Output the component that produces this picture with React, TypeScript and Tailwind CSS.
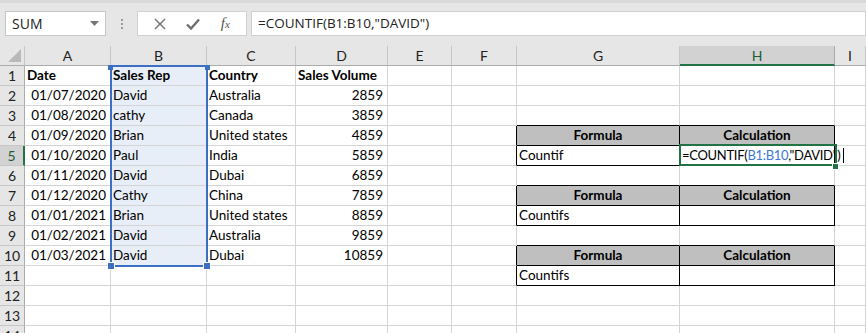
import React from 'react';

const COLS = ['A', 'B', 'C', 'D', 'E', 'F', 'G', 'H', 'I'];
const ROWS = 14;

type CellDef = { text: React.ReactNode; bold?: boolean; align?: 'left' | 'right' | 'center' };

const data: Record<string, CellDef> = {
    A1: { text: 'Date', bold: true },
    B1: { text: 'Sales Rep', bold: true },
    C1: { text: 'Country', bold: true },
    D1: { text: 'Sales Volume', bold: true },
    G4: { text: 'Formula', bold: true, align: 'center' },
    H4: { text: 'Calculation', bold: true, align: 'center' },
    G5: { text: 'Countif' },
    H5: {
        text: (
            <span className="text-[13px] tracking-[-0.3px] flex items-center">
                =COUNTIF(<span className="text-[#3c78d8]">B1:B10</span>,"DAVID")
                <span className="inline-block w-[1px] h-[15px] bg-black ml-[3px]" />
            </span>
        ),
    },
    G7: { text: 'Formula', bold: true, align: 'center' },
    H7: { text: 'Calculation', bold: true, align: 'center' },
    G8: { text: 'Countifs' },
    G10: { text: 'Formula', bold: true, align: 'center' },
    H10: { text: 'Calculation', bold: true, align: 'center' },
    G11: { text: 'Countifs' },
};

const rows: [string, string, string, string][] = [
    ['01/07/2020', 'David', 'Australia', '2859'],
    ['01/08/2020', 'cathy', 'Canada', '3859'],
    ['01/09/2020', 'Brian', 'United states', '4859'],
    ['01/10/2020', 'Paul', 'India', '5859'],
    ['01/11/2020', 'David', 'Dubai', '6859'],
    ['01/12/2020', 'Cathy', 'China', '7859'],
    ['01/01/2021', 'Brian', 'United states', '8859'],
    ['01/02/2021', 'David', 'Australia', '9859'],
    ['01/03/2021', 'David', 'Dubai', '10859'],
];
rows.forEach((r, i) => {
    const n = i + 2;
    data['A' + n] = { text: r[0], align: 'right' };
    data['B' + n] = { text: r[1] };
    data['C' + n] = { text: r[2] };
    data['D' + n] = { text: r[3], align: 'right' };
});

const tableRows = [4, 5, 7, 8, 10, 11];
const isTable = (r: number, c: number) => (c === 6 || c === 7) && tableRows.includes(r);

function Cell({ r, c }: { r: number; c: number }) {
    const key = COLS[c] + r;
    const cell = data[key];
    const header = (r === 4 || r === 7 || r === 10) && isTable(r, c);
    const selected = c === 1 && r <= 10;
    const right = isTable(r, c) || isTable(r, c + 1) ? 'border-r-black' : 'border-r-[#d4d4d4]';
    const bottom = isTable(r, c) || isTable(r + 1, c) ? 'border-b-black' : 'border-b-[#d4d4d4]';
    const bg = header ? 'bg-[#bfbfbf]' : selected ? 'bg-[#e8eef8]' : 'bg-white';
    const align =
        cell?.align === 'right' ? 'justify-end pr-[4px]' : cell?.align === 'center' ? 'justify-center' : 'justify-start pl-[2px]';
    return (
        <div
            className={`h-[20px] border-r border-b ${right} ${bottom} ${bg} flex items-center ${align} whitespace-nowrap text-[13.5px] text-black ${
                cell?.bold ? 'font-bold' : ''
            } ${key === 'H5' ? 'overflow-visible relative z-10' : 'overflow-hidden'}`}
        >
            {cell?.text}
        </div>
    );
}

export default function App() {
    return (
        <div className="w-[866px] h-[333px] overflow-hidden bg-white relative" style={{ fontFamily: 'Lato, "Liberation Sans", sans-serif' }}>
            {/* formula bar */}
            <div className="h-[46px] bg-[#e6e6e6] flex items-start pt-[10px] pl-[5px] border-t-[3px] border-t-[#dadada]">
                <div className="w-[101px] h-[25px] -mt-[2px] bg-white border border-[#c6c6c6] flex items-center justify-between pl-[6px] pr-[6px]">
                    <span className="text-[14px] text-[#222]" style={{ fontFamily: '"Open Sans", sans-serif' }}>SUM</span>
                    <svg width="9" height="5" viewBox="0 0 9 5"><path d="M0 0h9L4.5 5z" fill="#777" /></svg>
                </div>
                <div className="w-[31px] h-[25px] -mt-[2px] flex flex-col items-center justify-center gap-[2px]">
                    <span className="w-[2px] h-[2px] bg-[#9a9a9a]" />
                    <span className="w-[2px] h-[2px] bg-[#9a9a9a]" />
                    <span className="w-[2px] h-[2px] bg-[#9a9a9a]" />
                </div>
                <div className="w-[110px] h-[25px] -mt-[2px] bg-white border border-[#d0d0d0] flex items-center justify-around px-[6px]">
                    <svg width="12" height="12" viewBox="0 0 12 12"><path d="M1 1l10 10M11 1L1 11" stroke="#6e6e6e" strokeWidth="1.4" /></svg>
                    <svg width="14" height="12" viewBox="0 0 14 12"><path d="M1 6.5l4 4L13 1.5" stroke="#6e6e6e" strokeWidth="2.4" fill="none" /></svg>
                    <span className="text-[15px] italic text-[#555]" style={{ fontFamily: '"Liberation Serif", serif' }}>
                        f<span className="text-[11px]">x</span>
                    </span>
                </div>
                <div className="flex-1 h-[25px] -mt-[2px] ml-[4px] bg-white border border-[#d0d0d0] flex items-center pl-[6px]">
                    <span className="text-[13.5px] text-[#222]" style={{ fontFamily: '"Open Sans", sans-serif' }}>=COUNTIF(B1:B10,"DAVID")</span>
                </div>
            </div>

            {/* sheet */}
            <div className="relative grid grid-cols-[25px_86px_96px_89px_92px_64px_65px_163px_155px_31px]">
                {/* corner */}
                <div className="h-[20px] bg-[#e6e6e6] border-r border-b border-r-[#c6c6c6] border-b-[#ababab] relative">
                    <svg className="absolute right-[3px] bottom-[3px]" width="13" height="13" viewBox="0 0 13 13"><path d="M13 0v13H0z" fill="#b9b9b9" /></svg>
                </div>
                {COLS.map((col) => (
                    <div
                        key={col}
                        className={`h-[20px] border-r border-b flex items-center justify-center text-[14px] ${
                            col === 'H'
                                ? 'bg-[#d2d2d2] border-b-2 border-b-[#217346] text-[#1d5c3a] border-r-[#ababab]'
                                : 'bg-[#e6e6e6] border-b-[#ababab] border-r-[#c6c6c6] text-[#222]'
                        }`}
                    >
                        {col}
                    </div>
                ))}

                {Array.from({ length: ROWS }, (_, i) => i + 1).map((r) => (
                    <React.Fragment key={r}>
                        <div
                            className={`h-[20px] border-b flex items-center justify-center text-[14px] ${
                                r === 5
                                    ? 'bg-[#d2d2d2] border-r-2 border-r-[#217346] border-b-[#c6c6c6] text-[#1d5c3a]'
                                    : 'bg-[#e6e6e6] border-r border-r-[#ababab] border-b-[#c6c6c6] text-[#222]'
                            }`}
                        >
                            {r}
                        </div>
                        {COLS.map((_, c) => (
                            <Cell key={c} r={r} c={c} />
                        ))}
                    </React.Fragment>
                ))}

                {/* B1:B10 selection */}
                <div className="absolute left-[110px] top-[19px] w-[98px] h-[202px] border-2 border-[#3b6fc4] pointer-events-none" />
                <span className="absolute left-[108px] top-[19px] w-[5px] h-[5px] bg-[#3b6fc4]" />
                <span className="absolute left-[205px] top-[19px] w-[5px] h-[5px] bg-[#3b6fc4]" />
                <span className="absolute left-[108px] top-[217px] w-[6px] h-[6px] bg-[#3b6fc4] outline outline-1 outline-white" />
                <span className="absolute left-[204px] top-[217px] w-[6px] h-[6px] bg-[#3b6fc4] outline outline-1 outline-white" />

                {/* active cell H5 */}
                <div className="absolute left-[679px] top-[98px] w-[158px] h-[22px] border-2 border-[#217346] pointer-events-none z-20" />
                <span className="absolute left-[833px] top-[118px] w-[5px] h-[5px] bg-[#217346] outline outline-1 outline-white z-20" />
            </div>
        </div>
    );
}
